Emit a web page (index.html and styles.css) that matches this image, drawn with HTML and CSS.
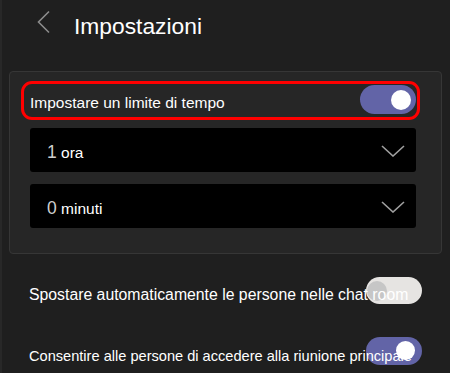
FILE: index.html
```html
<!DOCTYPE html>
<html lang="it">
<head>
<meta charset="utf-8">
<title>Impostazioni</title>
<link rel="stylesheet" href="styles.css">
</head>
<body>
<div class="page">
  <header class="header">
    <svg class="back" width="14" height="24" viewBox="0 0 14 24"><polyline points="12,1.5 1.5,12 12,22.5" fill="none" stroke="#8c8c8c" stroke-width="1.6"/></svg>
    <h1 class="title">Impostazioni</h1>
  </header>

  <section class="card">
    <div class="row-main">
      <span class="label-main">Impostare un limite di tempo</span>
      <span class="toggle toggle-on toggle-main"><span class="knob"></span></span>
    </div>
    <div class="dropdown">
      <span class="value"><span class="num">1</span> ora</span>
      <svg class="chev" width="24" height="12" viewBox="0 0 24 12"><polyline points="1,1 12,11 23,1" fill="none" stroke="#a0a0a0" stroke-width="1.6"/></svg>
    </div>
    <div class="dropdown">
      <span class="value"><span class="num">0</span> minuti</span>
      <svg class="chev" width="24" height="12" viewBox="0 0 24 12"><polyline points="1,1 12,11 23,1" fill="none" stroke="#a0a0a0" stroke-width="1.6"/></svg>
    </div>
  </section>

  <div class="options">
    <div class="opt">
      <span class="opt-label">Spostare automaticamente le persone nelle chat room</span>
      <span class="toggle toggle-off"><span class="knob"></span></span>
    </div>
    <div class="opt">
      <span class="opt-label opt-label-sm">Consentire alle persone di accedere alla riunione principale</span>
      <span class="toggle toggle-on toggle-small"><span class="knob"></span></span>
    </div>
  </div>
</div>
</body>
</html>
```

FILE: styles.css
```css
* { box-sizing: border-box; }
html, body {
  margin: 0;
  padding: 0;
  background: #1f1f1f;
  overflow: hidden;
}
body {
  width: 450px;
  height: 373px;
  font-family: "Liberation Sans", Arial, sans-serif;
  color: #ffffff;
  box-shadow: inset 2px 0 0 #282828;
}
.page { width: 450px; }

.header {
  height: 71px;
  display: flex;
  align-items: flex-start;
  padding: 13px 0 0 37px;
}
.back { margin-top: -3px; margin-right: 23px; }
.title {
  margin: 0;
  font-weight: normal;
  font-size: 22.8px;
  line-height: 26px;
  color: #ffffff;
}

.card {
  margin: 0 8px 0 9px;
  background: #262626;
  border: 1px solid #363636;
  border-radius: 4px;
  padding: 9px 25px 25px 20px;
}
.row-main {
  position: relative;
  height: 39px;
  display: flex;
  align-items: center;
}
.row-main::before {
  content: "";
  position: absolute;
  left: -9px;
  right: -4px;
  top: 0;
  bottom: 0;
  border: 3px solid #ff0000;
  border-radius: 11px;
}
.label-main {
  font-size: 15.5px;
  padding-top: 5px;
  color: #ffffff;
}

.toggle {
  position: absolute;
  width: 56px;
  border-radius: 15px;
}
.toggle .knob {
  position: absolute;
  border-radius: 50%;
}
.toggle-on { background: #6264a7; }
.toggle-on .knob { background: #ffffff; }
.toggle-main {
  right: 0;
  top: 4px;
  height: 29px;
}
.toggle-main .knob {
  width: 20px;
  height: 20px;
  right: 5px;
  top: 4.5px;
}

.dropdown {
  height: 44px;
  margin-top: 8px;
  background: #000000;
  border-radius: 3px;
  display: flex;
  align-items: center;
  justify-content: space-between;
  padding: 0 11px 0 17px;
}
.dropdown + .dropdown { margin-top: 12px; }
.value {
  font-size: 15.5px;
  padding-top: 4px;
  color: #ffffff;
}
.num {
  font-size: 17.5px;
  color: #cfcfcf;
}
.chev { margin-top: 2px; }

.options {
  padding: 23px 0 0 29px;
  display: flex;
  flex-direction: column;
  gap: 33px;
}
.opt {
  position: relative;
  height: 27px;
  display: flex;
  align-items: center;
  white-space: nowrap;
}
.opt-label {
  position: relative;
  z-index: 1;
  font-size: 15.8px;
  padding-top: 9px;
  color: #ffffff;
}
.opt-label-sm {
  font-size: 14.6px;
  padding-top: 10px;
}
.opt .toggle {
  left: 337px;
  top: 0;
  height: 27px;
}
.toggle-off { background: #e6e4e2; }
.toggle-off .knob {
  width: 20px;
  height: 20px;
  left: 1px;
  top: 3.5px;
  background: #c6c6c6;
}
.toggle-small { height: 28px !important; }
.toggle-small .knob {
  width: 19px;
  height: 19px;
  right: 7px;
  top: 4px;
}
```
